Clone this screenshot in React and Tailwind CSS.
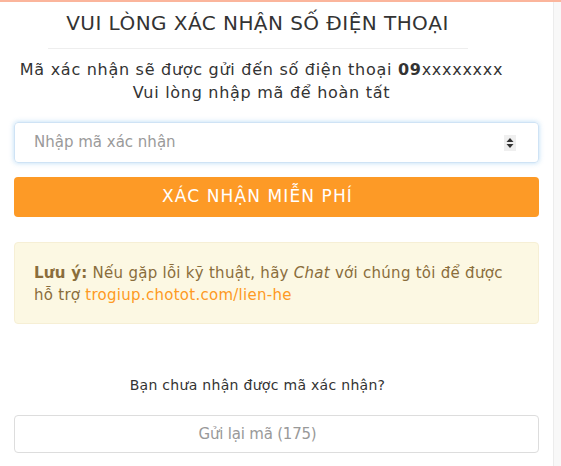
export default function App() {
  return (
    <div className="w-[561px] h-[466px] overflow-hidden bg-white border-t-2 border-[#fbb59c] flex font-['DejaVu_Sans',sans-serif]">
      <div className="w-[554px] shrink-0 border-r border-[#ececec] px-[14px]">
        {/* tiêu đề */}
        <h1 className="pt-[9px] pr-[38px] text-center text-[20px] leading-[24px] text-[#333] tracking-[0.45px]">
          VUI LÒNG XÁC NHẬN SỐ ĐIỆN THOẠI
        </h1>
        <div className="mt-[13px] ml-[34px] w-[420px] border-t border-[#eeeeee]" />
        <p className="mt-[9px] pr-[30px] text-center text-[16px] leading-[23px] text-[#333] tracking-[0.72px]">
          Mã xác nhận sẽ được gửi đến số điện thoại <b>09</b>xxxxxxxx
          <br />
          Vui lòng nhập mã để hoàn tất
        </p>

        {/* ô nhập mã */}
        <div className="mt-[18px] h-[41px] rounded-[4px] border border-[#cfe3f5] shadow-[0_0_5px_rgba(102,175,233,0.45)] flex items-center pl-[19px] pr-[22px]">
          <span className="flex-1 text-[15px] text-[#9a9a9a]">Nhập mã xác nhận</span>
          <span className="w-[12px] h-[16px] bg-[#efefef] flex items-center justify-center">
            <svg width="8" height="12" viewBox="0 0 8 12">
              <path d="M4 1 L7.5 5 H0.5 Z" fill="#333" />
              <path d="M4 11 L7.5 7 H0.5 Z" fill="#333" />
            </svg>
          </span>
        </div>

        <button className="mt-[14px] w-full h-[40px] rounded-[4px] bg-[#fd9a26] pr-[38px] text-white text-[17px] tracking-[1.1px]">
          XÁC NHẬN MIỄN PHÍ
        </button>

        {/* lưu ý */}
        <div className="mt-[25px] h-[82px] rounded-[4px] bg-[#fcf8e3] border border-[#f6efd5] pl-[19px] pr-[20px] pt-[19px] text-[15px] leading-[22px] text-[#8a6d3b] tracking-[0.27px]">
          <p>
            <b>Lưu ý:</b> Nếu gặp lỗi kỹ thuật, hãy <i>Chat</i> với chúng tôi để được
            <br />
            hỗ trợ <span className="text-[#fe9a24]">trogiup.chotot.com/lien-he</span>
          </p>
        </div>

        <p className="mt-[50px] pr-[38px] text-center text-[14px] leading-[22px] text-[#333] tracking-[0.3px]">
          Bạn chưa nhận được mã xác nhận?
        </p>

        <button className="mt-[19px] w-full h-[38px] rounded-[4px] border border-[#dddddd] bg-white pr-[38px] text-[15px] text-[#999] tracking-[-0.2px]">
          Gửi lại mã (175)
        </button>
      </div>
      <div className="flex-1 bg-[#f8f8f8]" />
    </div>
  );
}
